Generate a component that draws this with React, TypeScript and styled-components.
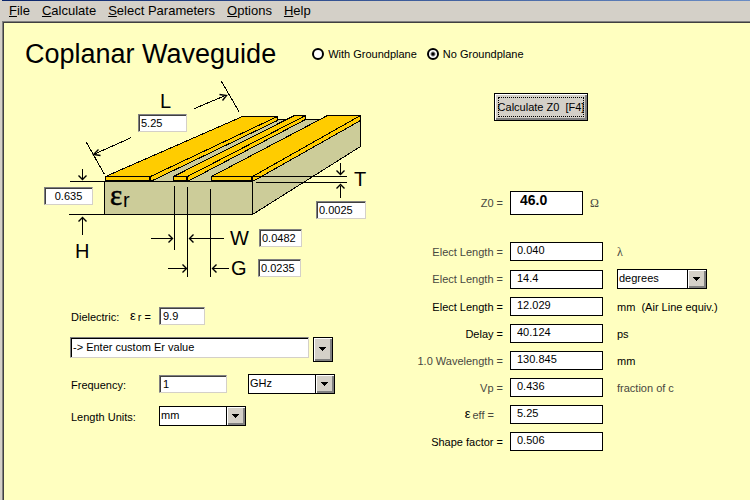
import React from 'react';
import styled, { createGlobalStyle, css } from 'styled-components';

const GlobalStyle = createGlobalStyle`
  *, *::before, *::after { box-sizing: border-box; }
  body {
    margin: 0;
    background: #ffffc0;
    color: #000;
    font-family: "Liberation Sans", Arial, sans-serif;
    font-size: 11px;
    line-height: 14px;
  }
  input, select, button { font: inherit; color: inherit; margin: 0; border-radius: 0; }
`;

const Window = styled.div`
  display: flex;
  flex-direction: column;
  min-height: 100vh;
  padding-left: 2px;
  background: #d4d0c8;
`;

const TitleEdge = styled.div`
  height: 1px;
  background: linear-gradient(to right, #0a246a, #6a8cc4);
`;

const MenuBar = styled.nav`
  display: flex;
  gap: 12px;
  height: 20px;
  padding-left: 7px;
  font-size: 13px;
  line-height: 19px;
`;

const MenuLink = styled.a`
  color: #000;
  text-decoration: none;
  white-space: nowrap;
`;

const Client = styled.main`
  flex: 1;
  display: flex;
  flex-direction: column;
  border-top: 1px solid #808080;
  border-left: 1px solid #808080;
`;

const Form = styled.form`
  flex: 1;
  border-top: 1px solid #404040;
  border-left: 1px solid #404040;
  background: #ffffc0;
`;

const Header = styled.header`
  display: flex;
  align-items: center;
  gap: 36px;
  height: 55px;
  padding: 6px 0 0 21px;
`;

const Title = styled.h1`
  margin: 0;
  font-size: 27px;
  line-height: 32px;
  font-weight: 400;
  white-space: nowrap;
`;

const RadioGroup = styled.div`
  display: flex;
  gap: 10px;
`;

const RadioLabel = styled.label`
  display: flex;
  align-items: center;
  gap: 4px;
  white-space: nowrap;
`;

const Radio = styled.input.attrs({ type: 'radio' })`
  appearance: none;
  width: 12px;
  height: 12px;
  border: 2px solid #000;
  border-radius: 50%;
  background: #fff;

  &:checked { background: radial-gradient(circle, #000 1px, #fff 3px); }
`;

const Body = styled.div`
  display: flex;
  align-items: flex-start;
`;

const Inputs = styled.section`
  flex: none;
  padding: 0 43px 0 36px;
`;

const Diagram = styled.div`
  position: relative;
  width: 330px;
  height: 202px;

  svg { display: block; }
`;

const sunken = css`
  border: 1px solid;
  border-color: #808080 #d4d0c8 #d4d0c8 #808080;
  background: #fff;
  box-shadow: inset 1px 1px 0 #404040;
  outline: none;
`;

const TextBox = styled.input<{ $w: number }>`
  ${sunken}
  width: ${(p) => p.$w}px;
  height: 18px;
  padding: 0 0 0 3px;
`;

const DimensionBox = styled(TextBox)<{ $x: number; $y: number; $center?: boolean }>`
  position: absolute;
  left: ${(p) => p.$x}px;
  top: ${(p) => p.$y}px;
  padding: 0 2px;
  text-align: ${(p) => (p.$center ? 'center' : 'left')};
`;

const Settings = styled.div`
  display: grid;
  gap: 12px;
  margin-top: 27px;
  padding-left: 30px;
`;

const SettingRow = styled.div`
  display: flex;
  align-items: center;
`;

const SettingLabel = styled.label`
  display: flex;
  width: 89px;
  padding: 2px 0 0 1px;
  white-space: nowrap;
`;

const Epsilon = styled.span`
  margin: 0 2px 0 auto;
  font-size: 13px;
  line-height: 11px;
  color: #000;
`;

const SettingEpsilonTail = styled.span`
  margin-right: 8px;
`;

const MaterialRow = styled.div`
  display: flex;
  align-items: flex-start;
  gap: 4px;
`;

const MaterialBox = styled.input`
  ${sunken}
  width: 239px;
  height: 21px;
  padding: 0 0 1px 2px;
  box-shadow: inset 1px 1px 0 #000;
`;

const raised = css`
  border: 1px solid #000;
  background: #d4d0c8;
  box-shadow: inset 1px 1px 0 #fff, inset -2px -2px 0 #808080;
`;

const DropButton = styled.button`
  ${raised}
  display: flex;
  align-items: center;
  justify-content: center;
  width: 20px;
  height: 25px;
  padding: 0 2px 2px 0;
`;

const SelectBox = styled.span<{ $w: number; $indent?: number }>`
  position: relative;
  display: block;
  width: ${(p) => p.$w}px;
  height: 20px;
  margin-left: ${(p) => p.$indent ?? 0}px;
`;

const Select = styled.select`
  appearance: none;
  display: block;
  width: 100%;
  height: 100%;
  padding: 0 20px 2px 1px;
  border: 1px solid #000;
  background: #fff;
  outline: none;
`;

const SelectArrow = styled.span`
  ${raised}
  position: absolute;
  top: 0;
  right: 0;
  bottom: 0;
  display: flex;
  align-items: center;
  justify-content: center;
  width: 20px;
  padding: 0 1px 1px 0;
  pointer-events: none;
`;

const Results = styled.section`
  flex: 1;
  padding-top: 15px;
`;

const CalculateButton = styled.button`
  ${raised}
  display: block;
  width: 94px;
  height: 28px;
  margin-left: 81px;
  padding: 3px;
`;

const FocusRing = styled.span`
  display: flex;
  align-items: center;
  justify-content: center;
  height: 20px;
  border: 1px dotted #000;
  white-space: pre;
`;

const ResultList = styled.div`
  display: grid;
  gap: 8px;
  margin-top: 27px;
`;

const ResultRow = styled.div`
  display: flex;
  align-items: center;
`;

const ImpedanceRow = styled(ResultRow)`
  margin-top: 70px;
`;

const ResultLabel = styled.label<{ $dim?: boolean; $inset?: boolean }>`
  display: flex;
  justify-content: flex-end;
  width: 97px;
  padding-right: ${(p) => (p.$inset ? 16 : 7)}px;
  color: ${(p) => (p.$dim ? '#484840' : '#000')};
  white-space: nowrap;
`;

const ResultBox = styled.input`
  width: 93px;
  height: 19px;
  border: 1px solid #000;
  padding: 0 0 3px 6px;
  background: #fff;
  outline: none;
`;

const ImpedanceBox = styled(ResultBox)`
  width: 73px;
  height: 24px;
  padding: 0 0 6px 9px;
  font-size: 14px;
  font-weight: 700;
`;

const Unit = styled.span<{ $dim?: boolean; $near?: boolean }>`
  margin-left: ${(p) => (p.$near ? 7 : 14)}px;
  color: ${(p) => (p.$dim ? '#484840' : '#000')};
  white-space: pre;
`;

const Symbol = styled.span`
  font-family: "Liberation Serif", serif;
  font-size: 12px;
`;

function Triangle() {
  return (
    <svg width="7" height="4" viewBox="0 0 7 4" shapeRendering="crispEdges" aria-hidden="true">
      <path d="M0 0H7V1H6V2H5V3H4V4H3V3H2V2H1V1H0Z" fill="#000" />
    </svg>
  );
}

function DropDown(props: { id?: string; label?: string; width: number; indent?: number; options: string[] }) {
  return (
    <SelectBox $w={props.width} $indent={props.indent}>
      <Select id={props.id} aria-label={props.label} defaultValue={props.options[0]}>
        {props.options.map((o) => (
          <option key={o}>{o}</option>
        ))}
      </Select>
      <SelectArrow>
        <Triangle />
      </SelectArrow>
    </SelectBox>
  );
}

function WaveguideDrawing() {
  return (
    <svg width="330" height="202" viewBox="40 78 330 202" role="img" aria-label="Coplanar waveguide cross-section">
      <g transform="translate(.5 .5)" stroke="#000" strokeWidth="1" fill="none" shapeRendering="crispEdges">
        <path d="M104 181L240 119H360V146L252 214H104Z" fill="#cccc99" />
        <path d="M104 181H252V214" />
        <g fill="#ffcc00" strokeLinejoin="round">
          <path d="M150 176L277 116V120L150 181Z" />
          <path d="M105 176L242 116H277L150 176Z" />
          <path d="M105 176H149V180H105Z" />
          <path d="M187 176L305 115V119L187 181Z" />
          <path d="M173 176L294 115H305L187 176Z" />
          <path d="M173 176H186V180H173Z" />
          <path d="M252 176L360 115V120L252 181Z" />
          <path d="M211 176L327 115H360L252 176Z" />
          <path d="M211 176H251V180H211Z" />
        </g>
        <path d="M69 181H252M68 214H103M252 176H346M255 182H346" />
        <path d="M174 185V249M187 186V276M210 188V276" />
        <path d="M86 142L104 174M221 81L239 112" />
        <path d="M131 137L93 154M194 108L225 95" />
        <path d="M82 168V179M82 234V217M340 162V173M340 197V185" />
        <path d="M150 238H172M223 238H189M167 268H186M228 268H212" />
      </g>
      <g transform="translate(.5 .5)" stroke="#000" strokeWidth="1.4" fill="none">
        <path d="M98 149L93 154L100 155M219 94L226 95L222 100" />
        <path d="M78 175L82 179L86 175M78 221L82 217L86 221" />
        <path d="M336 170L340 174L344 170M336 188L340 184L344 188" />
        <path d="M168 234L172 238L168 242M193 234L189 238L193 242" />
        <path d="M182 264L186 268L182 272M216 264L212 268L216 272" />
      </g>
      <g fill="#000" fontFamily="Liberation Sans, Arial, sans-serif" fontSize="20">
        <text x="160" y="108">L</text>
        <text x="75" y="258">H</text>
        <text x="354" y="186">T</text>
        <text x="230" y="245">W</text>
        <text x="231" y="275">G</text>
        <text x="123" y="207">r</text>
        <text x="110" y="205" fontFamily="Liberation Serif, serif" fontSize="29" stroke="#000" strokeWidth="0.5">ε</text>
      </g>
    </svg>
  );
}

const menus = ['File', 'Calculate', 'Select Parameters', 'Options', 'Help'];

const dimensions = [
  { name: 'Length L', value: '5.25', x: 98, y: 36, w: 49 },
  { name: 'Height H', value: '0.635', x: 4, y: 109, w: 49, center: true },
  { name: 'Thickness T', value: '0.0025', x: 276, y: 123, w: 50 },
  { name: 'Width W', value: '0.0482', x: 219, y: 151, w: 43 },
  { name: 'Gap G', value: '0.0235', x: 218, y: 181, w: 43 },
];

type Result = {
  id: string;
  label: React.ReactNode;
  value: string;
  unit?: React.ReactNode;
  dim?: boolean;
  inset?: boolean;
};

const results: Result[] = [
  { id: 'wavelengths', label: 'Elect Length =', value: '0.040', unit: <Unit $dim><Symbol>λ</Symbol></Unit>, dim: true },
  {
    id: 'angle',
    label: 'Elect Length =',
    value: '14.4',
    dim: true,
    unit: <DropDown label="Angle units" width={90} indent={14} options={['degrees', 'radians']} />,
  },
  { id: 'airline', label: 'Elect Length =', value: '12.029', unit: <Unit>{'mm  (Air Line equiv.)'}</Unit> },
  { id: 'delay', label: 'Delay =', value: '40.124', unit: <Unit>ps</Unit> },
  { id: 'wavelength', label: '1.0 Wavelength =', value: '130.845', unit: <Unit>mm</Unit>, dim: true },
  { id: 'velocity', label: 'Vp =', value: '0.436', unit: <Unit $dim>fraction of c</Unit>, dim: true },
  { id: 'eeff', label: <><Epsilon>ε</Epsilon>eff =</>, value: '5.25', dim: true, inset: true },
  { id: 'shape', label: 'Shape factor =', value: '0.506' },
];

export default function App() {
  return (
    <>
      <GlobalStyle />
      <Window>
        <TitleEdge />
        <MenuBar>
          {menus.map((m) => (
            <MenuLink key={m} href="#">
              <u>{m[0]}</u>
              {m.slice(1)}
            </MenuLink>
          ))}
        </MenuBar>
        <Client>
          <Form onSubmit={(e: React.FormEvent) => e.preventDefault()}>
            <Header>
              <Title>Coplanar Waveguide</Title>
              <RadioGroup>
                <RadioLabel>
                  <Radio name="ground" />
                  With Groundplane
                </RadioLabel>
                <RadioLabel>
                  <Radio name="ground" defaultChecked />
                  No Groundplane
                </RadioLabel>
              </RadioGroup>
            </Header>
            <Body>
              <Inputs>
                <Diagram>
                  <WaveguideDrawing />
                  {dimensions.map((d) => (
                    <DimensionBox
                      key={d.name}
                      aria-label={d.name}
                      defaultValue={d.value}
                      $x={d.x}
                      $y={d.y}
                      $w={d.w}
                      $center={d.center}
                    />
                  ))}
                </Diagram>
                <Settings>
                  <SettingRow>
                    <SettingLabel htmlFor="er">
                      Dielectric:
                      <Epsilon>ε</Epsilon>
                      <SettingEpsilonTail>r =</SettingEpsilonTail>
                    </SettingLabel>
                    <TextBox id="er" $w={46} defaultValue="9.9" />
                  </SettingRow>
                  <MaterialRow>
                    <MaterialBox aria-label="Material" defaultValue="-> Enter custom Er value" />
                    <DropButton type="button" aria-label="Show materials">
                      <Triangle />
                    </DropButton>
                  </MaterialRow>
                  <SettingRow>
                    <SettingLabel htmlFor="freq">Frequency:</SettingLabel>
                    <TextBox id="freq" $w={68} defaultValue="1" />
                    <DropDown label="Frequency units" width={87} indent={21} options={['GHz', 'MHz']} />
                  </SettingRow>
                  <SettingRow>
                    <SettingLabel htmlFor="units">Length Units:</SettingLabel>
                    <DropDown id="units" width={87} options={['mm', 'mil', 'inch']} />
                  </SettingRow>
                </Settings>
              </Inputs>
              <Results>
                <CalculateButton type="submit">
                  <FocusRing>{'Calculate Z0  [F4]'}</FocusRing>
                </CalculateButton>
                <ImpedanceRow>
                  <ResultLabel $dim htmlFor="z0">Z0 =</ResultLabel>
                  <ImpedanceBox id="z0" readOnly value="46.0" />
                  <Unit $dim $near><Symbol>Ω</Symbol></Unit>
                </ImpedanceRow>
                <ResultList>
                  {results.map((r) => (
                    <ResultRow key={r.id}>
                      <ResultLabel htmlFor={r.id} $dim={r.dim} $inset={r.inset}>{r.label}</ResultLabel>
                      <ResultBox id={r.id} readOnly value={r.value} />
                      {r.unit}
                    </ResultRow>
                  ))}
                </ResultList>
              </Results>
            </Body>
          </Form>
        </Client>
      </Window>
    </>
  );
}
